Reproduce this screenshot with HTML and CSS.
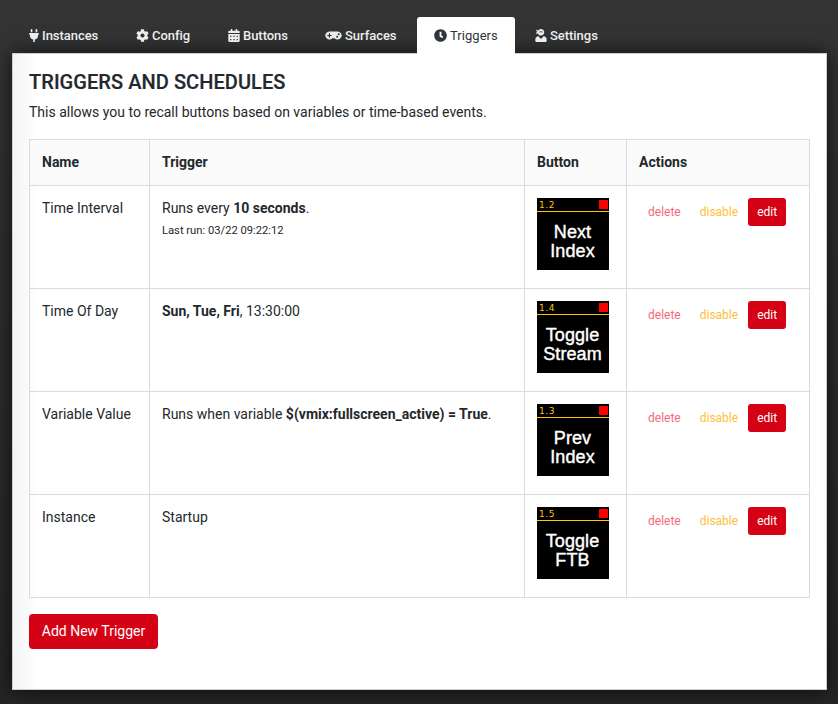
FILE: index.html
```html
<!DOCTYPE html>
<html lang="en">
<head>
<meta charset="utf-8">
<title>Triggers</title>
<link rel="stylesheet" href="styles.css">
</head>
<body>
<nav class="tabs">
  <a class="tab"><svg class="icon icon-plug" viewBox="0 0 384 512"><path d="M320,32a32,32,0,0,0-64,0v96h64Zm48,128H16A16,16,0,0,0,0,176v32a16,16,0,0,0,16,16H32v32A160.07,160.07,0,0,0,160,412.8V512h64V412.8A160.07,160.07,0,0,0,352,256V224h16a16,16,0,0,0,16-16V176A16,16,0,0,0,368,160ZM128,32a32,32,0,0,0-64,0v96h64Z"/></svg><span>Instances</span></a>
  <a class="tab"><svg class="icon" viewBox="0 0 512 512"><path d="M487.4 315.7l-42.6-24.6c4.3-23.2 4.3-47 0-70.2l42.6-24.6c4.9-2.8 7.1-8.6 5.5-14-11.1-35.6-30-67.8-54.7-94.6-3.8-4.1-10-5.1-14.8-2.3L380.8 110c-17.9-15.4-38.5-27.3-60.8-35.1V25.8c0-5.6-3.9-10.5-9.4-11.7-36.7-8.2-74.3-7.8-109.2 0-5.5 1.2-9.4 6.1-9.4 11.7V75c-22.2 7.9-42.8 19.8-60.8 35.1L88.7 85.5c-4.9-2.8-11-1.9-14.8 2.3-24.7 26.7-43.6 58.9-54.7 94.6-1.7 5.4.6 11.2 5.5 14L67.3 221c-4.3 23.2-4.3 47 0 70.2l-42.6 24.6c-4.9 2.8-7.1 8.6-5.5 14 11.1 35.6 30 67.8 54.7 94.6 3.8 4.1 10 5.1 14.8 2.3l42.6-24.6c17.9 15.4 38.5 27.3 60.8 35.1v49.2c0 5.6 3.9 10.5 9.4 11.7 36.7 8.2 74.3 7.8 109.2 0 5.5-1.2 9.4-6.1 9.4-11.7v-49.2c22.2-7.9 42.8-19.8 60.8-35.1l42.6 24.6c4.9 2.8 11 1.9 14.8-2.3 24.7-26.7 43.6-58.9 54.7-94.6 1.5-5.5-.7-11.3-5.6-14.1zM256 336c-44.1 0-80-35.9-80-80s35.9-80 80-80 80 35.9 80 80-35.9 80-80 80z"/></svg><span>Config</span></a>
  <a class="tab"><svg class="icon icon-calendar" viewBox="0 0 448 512"><path fill-rule="evenodd" d="M0 464a48 48 0 0 0 48 48h352a48 48 0 0 0 48-48V192H0zM72 264h48v48H72zm128 0h48v48h-48zm128 0h48v48h-48zM72 392h48v48H72zm128 0h48v48h-48zm128 0h48v48h-48zM400 64h-48V16a16 16 0 0 0-16-16h-32a16 16 0 0 0-16 16v48H160V16a16 16 0 0 0-16-16h-32a16 16 0 0 0-16 16v48H48a48 48 0 0 0-48 48v48h448v-48a48 48 0 0 0-48-48z"/></svg><span>Buttons</span></a>
  <a class="tab"><svg class="icon icon-gamepad" viewBox="0 0 640 512"><path fill-rule="evenodd" d="M480 96H160a160 160 0 1 0 114.200 272h91.500A160 160 0 1 0 480 96zM248 268a12 12 0 0 1-12 12h-52v52a12 12 0 0 1-12 12h-24a12 12 0 0 1-12-12v-52H84a12 12 0 0 1-12-12v-24a12 12 0 0 1 12-12h52v-52a12 12 0 0 1 12-12h24a12 12 0 0 1 12 12v52h52a12 12 0 0 1 12 12zm216 76a40 40 0 1 1 0-80 40 40 0 0 1 0 80zm64-96a40 40 0 1 1 0-80 40 40 0 0 1 0 80z"/></svg><span>Surfaces</span></a>
  <a class="tab tab-active"><svg class="icon" viewBox="0 0 512 512"><path d="M256 8C119 8 8 119 8 256s111 248 248 248 248-111 248-248S393 8 256 8zm57.100 350.100L224.900 294c-3.100-2.300-4.900-5.900-4.900-9.700V116c0-6.600 5.400-12 12-12h48c6.600 0 12 5.400 12 12v137.700l63.500 46.200c5.400 3.900 6.500 11.400 2.600 16.800l-28.200 38.800c-3.900 5.300-11.400 6.500-16.800 2.600z"/></svg><span>Triggers</span></a>
  <a class="tab"><svg class="icon icon-user" viewBox="0 0 448 512"><path fill-rule="evenodd" d="M325 289l-101 101-101-101C53 292 0 351 0 422v42a48 48 0 0 0 48 48h352a48 48 0 0 0 48-48v-42c0-71-53-130-123-133zM32 192c27 0 51-11 69-29 15 53 64 93 123 93 71 0 128-57 128-128S295 0 224 0c-50 0-94 29-115 71C91 47 64 32 32 32c0 34 17 63 43 80-26 17-43 47-43 80zm144-96h96c18 0 32 14 32 32H144c0-18 14-32 32-32z"/></svg><span>Settings</span></a>
</nav>
<main class="panel">
  <h4 class="title">TRIGGERS AND SCHEDULES</h4>
  <p class="intro">This allows you to recall buttons based on variables or time-based events.</p>
  <table class="triggers">
    <colgroup><col class="col-name"><col class="col-trigger"><col class="col-button"><col class="col-actions"></colgroup>
    <thead><tr><th>Name</th><th>Trigger</th><th>Button</th><th>Actions</th></tr></thead>
    <tbody>
      <tr>
        <td>Time Interval</td>
        <td>Runs every <b>10 seconds</b>.<br><small>Last run: 03/22 09:22:12</small></td>
        <td><div class="key"><div class="key-bar"><span>1.2</span><i class="led"></i></div><div class="key-text">Next<br>Index</div></div></td>
        <td><div class="actions"><a class="btn delete">delete</a><a class="btn disable">disable</a><a class="btn edit">edit</a></div></td>
      </tr>
      <tr>
        <td>Time Of Day</td>
        <td><b>Sun, Tue, Fri</b>, 13:30:00</td>
        <td><div class="key"><div class="key-bar"><span>1.4</span><i class="led"></i></div><div class="key-text">Toggle<br>Stream</div></div></td>
        <td><div class="actions"><a class="btn delete">delete</a><a class="btn disable">disable</a><a class="btn edit">edit</a></div></td>
      </tr>
      <tr>
        <td>Variable Value</td>
        <td>Runs when variable <b>$(vmix:fullscreen_active) = True</b>.</td>
        <td><div class="key"><div class="key-bar"><span>1.3</span><i class="led"></i></div><div class="key-text">Prev<br>Index</div></div></td>
        <td><div class="actions"><a class="btn delete">delete</a><a class="btn disable">disable</a><a class="btn edit">edit</a></div></td>
      </tr>
      <tr>
        <td>Instance</td>
        <td>Startup</td>
        <td><div class="key"><div class="key-bar"><span>1.5</span><i class="led"></i></div><div class="key-text">Toggle<br>FTB</div></div></td>
        <td><div class="actions"><a class="btn delete">delete</a><a class="btn disable">disable</a><a class="btn edit">edit</a></div></td>
      </tr>
    </tbody>
  </table>
  <button class="add">Add New Trigger</button>
</main>
</body>
</html>
```
FILE: styles.css
```css
* { box-sizing: border-box; }
body {
  margin: 0;
  height: 704px;
  overflow: hidden;
  padding: 17px 11px 14px 12px;
  background: linear-gradient(#333 0, #333 50px, #262424 704px);
  color: #23282c;
  font: 14px/21px Roboto, sans-serif;
}
.tabs {
  display: grid;
  grid-template-columns: 107px 92px 97px 109px 98px 100px;
  height: 36px;
}
.tab:last-child { margin-left: 3px; }
.tab {
  display: flex;
  align-items: center;
  gap: 3px;
  padding: 0 0 0 17px;
  height: 36px;
  font-size: 13px;
  font-weight: 500;
  letter-spacing: -.04px;
  color: #ebedef;
  white-space: nowrap;
}
.tab-active {
  position: relative;
  z-index: 1;
  height: 37px;
  padding-bottom: 1px;
  background: #fff;
  border-radius: 3px 3px 0 0;
  color: #2f353a;
  font-weight: 400;
  letter-spacing: .04px;
}
.icon { width: 13px; height: 13px; fill: currentColor; flex: none; }
.icon-plug { width: 10px; }
.icon-calendar, .icon-user { width: 12px; }
.icon-gamepad { width: 17px; }
.panel {
  height: 637px;
  padding: 17px 17px 0 16px;
  border: 1px solid #c8ced3;
  background: linear-gradient(90deg, #f3f4f5 0, #fff 25px);
  box-shadow: 0 0 18px rgba(0, 0, 0, .7);
}
.title {
  margin: 0 0 8px;
  font-size: 20px;
  line-height: 23px;
  font-weight: 500;
  letter-spacing: .06px;
  -webkit-text-stroke: .2px currentColor;
}
.intro { margin: 0 0 16px; }
.triggers {
  width: 781px;
  table-layout: fixed;
  border-collapse: collapse;
}
.col-name { width: 120px; }
.col-trigger { width: 375px; }
.col-button { width: 102px; }
.col-actions { width: 183px; }
th, td {
  border: 1px solid #d8dbde;
  padding: 12px;
  text-align: left;
  vertical-align: top;
}
th { height: 46px; background: #fafafa; font-weight: 700; }
td { height: 103px; }
b { font-weight: 700; }
small { font-size: 11.2px; }
.key {
  width: 72px;
  height: 72px;
  background: #000;
  color: #fff;
  font: 18px/19px "Liberation Sans", sans-serif;
  text-align: center;
}
.key-bar {
  display: flex;
  justify-content: space-between;
  height: 14px;
  border-bottom: 1px solid #ffc600;
  padding: 2px 1px 0 2px;
  color: #ffc600;
  font: 9px/10px "DejaVu Sans", sans-serif;
  letter-spacing: .6px;
}
.led { width: 9px; height: 9px; background: #f00; }
.key-text { padding: 11px 1px 0 0; letter-spacing: .1px; -webkit-text-stroke: .4px #fff; }
.actions { display: flex; gap: 1px; }
.btn {
  height: 28px;
  padding: 0 8px;
  border: 1px solid transparent;
  border-radius: 3px;
  font-size: 12px;
  line-height: 27px;
}
.delete { color: #f5697b; }
.disable { color: #ffbe3c; }
.edit { background: #d50215; color: #fff; }
.add {
  display: block;
  margin-top: 16px;
  width: 129px;
  height: 35px;
  padding: 0;
  border: 0;
  border-radius: 4px;
  background: #d50215;
  color: #fff;
  font: 14px/21px Roboto, sans-serif;
}
```
